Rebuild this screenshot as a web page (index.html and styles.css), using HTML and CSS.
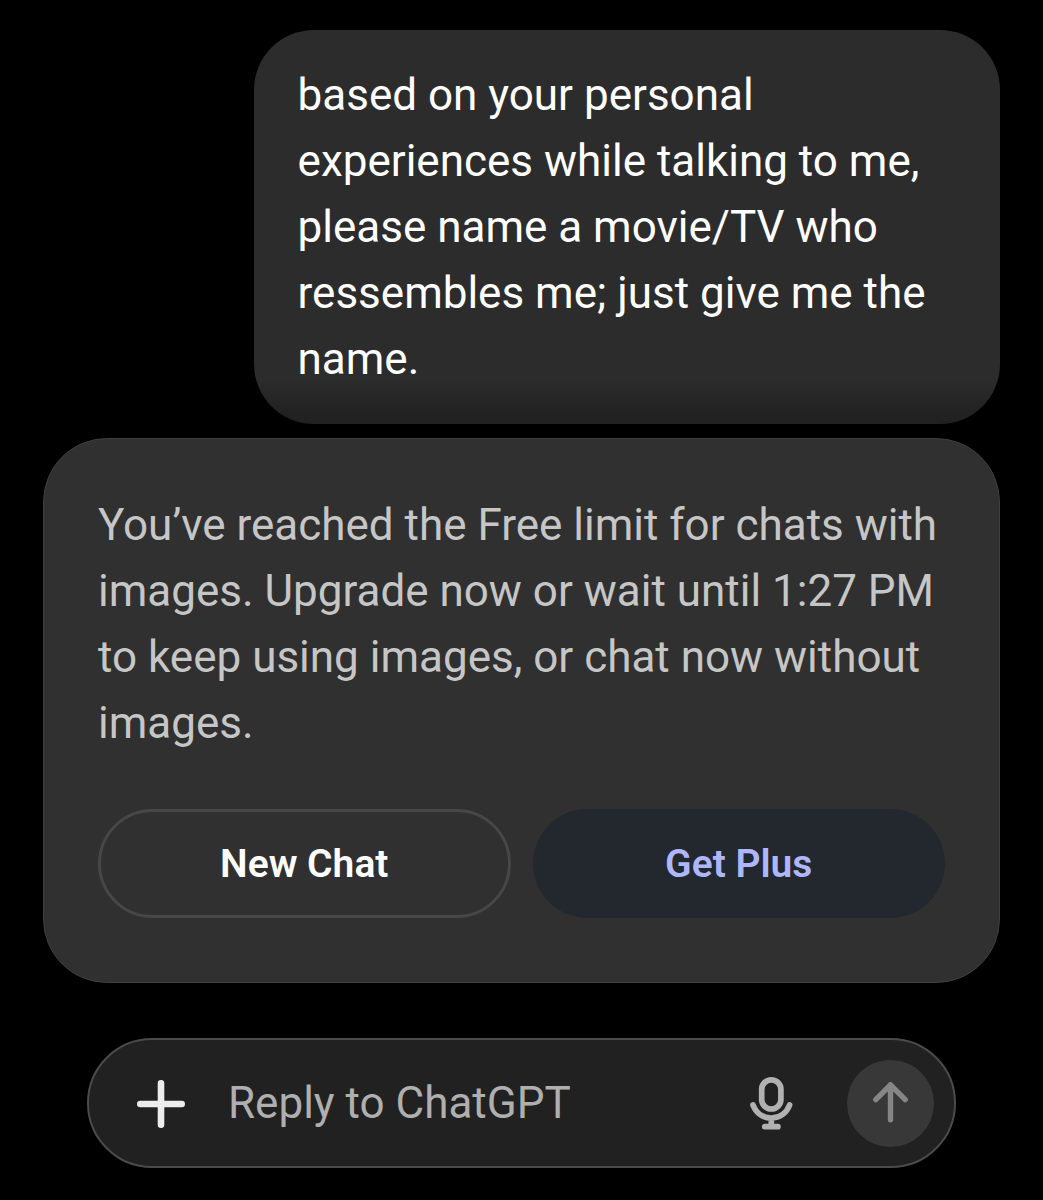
FILE: index.html
```html
<!DOCTYPE html>
<html lang="en">
<head>
<meta charset="utf-8">
<meta name="viewport" content="width=device-width, initial-scale=1">
<title>ChatGPT</title>
<link rel="stylesheet" href="styles.css">
</head>
<body>
<main class="chat">
  <p class="message">based on your personal experiences while talking to me, please name a movie/TV who ressembles me; just give me the name.</p>
  <section class="notice">
    <p class="notice-text">You’ve reached the Free limit for chats with images. Upgrade now or wait until 1:27 PM to keep using images, or chat now without images.</p>
    <div class="actions">
      <button type="button" class="action action-outline">New Chat</button>
      <button type="button" class="action action-plus">Get Plus</button>
    </div>
  </section>
  <form class="composer">
    <button type="button" class="icon-button" aria-label="Add attachment">
      <svg width="48" height="50" viewBox="0 0 48 50" fill="none" stroke="currentColor" stroke-width="6.600" stroke-linecap="round"><path d="M24 5.300v41.400M3.300 26h41.400"/></svg>
    </button>
    <input class="field" type="text" placeholder="Reply to ChatGPT" aria-label="Reply to ChatGPT">
    <button type="button" class="icon-button mic" aria-label="Voice input">
      <svg width="44" height="54" viewBox="0 0 44 54" fill="none" stroke="currentColor" stroke-width="5.700" stroke-linecap="round"><rect x="12.700" y="3.800" width="19.200" height="29.200" rx="9.600"/><path d="M4 29C7 37 13.800 42 22.300 42S37.600 37 40.600 29M22.300 42v8M15.700 50.700h13.200"/></svg>
    </button>
    <button type="submit" class="send" aria-label="Send">
      <svg width="36" height="42" viewBox="0 0 36 42" fill="none" stroke="currentColor" stroke-width="5.400" stroke-linecap="round" stroke-linejoin="round"><path d="M17.500 37.800V2.800M2.800 17.700l14.700-14.900 14.700 14.900"/></svg>
    </button>
  </form>
</main>
</body>
</html>
```
FILE: styles.css
```css
* {
  box-sizing: border-box;
}

body {
  margin: 0;
  background: #000;
  font-family: Roboto, "Noto Sans", sans-serif;
  font-size: 44px;
  line-height: 66px;
}

p {
  margin: 0;
}

button,
input {
  font: inherit;
}

button {
  padding: 0;
  border: 0;
  cursor: pointer;
}

svg {
  display: block;
  overflow: visible;
}

.chat {
  display: flex;
  flex-direction: column;
  padding: 30px 43px 32px;
}

.message {
  align-self: flex-end;
  width: 78%;
  padding: 32px 44px;
  border-radius: 60px;
  background: linear-gradient(to top, #212121, #222 12px, #2c2c2c 44px);
  color: #fff;
}

.notice {
  margin-top: 14px;
  padding: 53px 54px 64px;
  border: 1px solid #3f3f3f;
  border-radius: 64px;
  background: #303030;
  color: #c6c6c6;
}

.actions {
  display: grid;
  grid-template-columns: 1fr 1fr;
  gap: 22px;
  margin-top: 53px;
}

.action {
  height: 109px;
  border-radius: 55px;
  font-size: 39px;
  font-weight: 600;
}

.action-outline {
  border: 3px solid #474747;
  background: transparent;
  color: #fff;
}

.action-plus {
  background: #23272e;
  color: #b0b6fb;
}

.composer {
  display: flex;
  align-items: center;
  height: 130px;
  margin: 55px 44px 0;
  padding: 0 20px 0 48px;
  border: 2px solid #4b4b4b;
  border-radius: 65px;
  background: #212121;
}

.icon-button {
  background: transparent;
  color: #ececec;
}

.mic {
  margin-right: 54px;
  color: #b1b1b1;
}

.field {
  flex: 1;
  min-width: 0;
  margin: 0 24px 0 43px;
  padding: 0;
  border: 0;
  outline: 0;
  background: transparent;
  color: #fff;
}

.field::placeholder {
  color: #afafaf;
  opacity: 1;
}

.send {
  display: grid;
  place-items: center;
  width: 87px;
  height: 87px;
  border-radius: 50%;
  background: #383838;
  color: #868686;
}
```
